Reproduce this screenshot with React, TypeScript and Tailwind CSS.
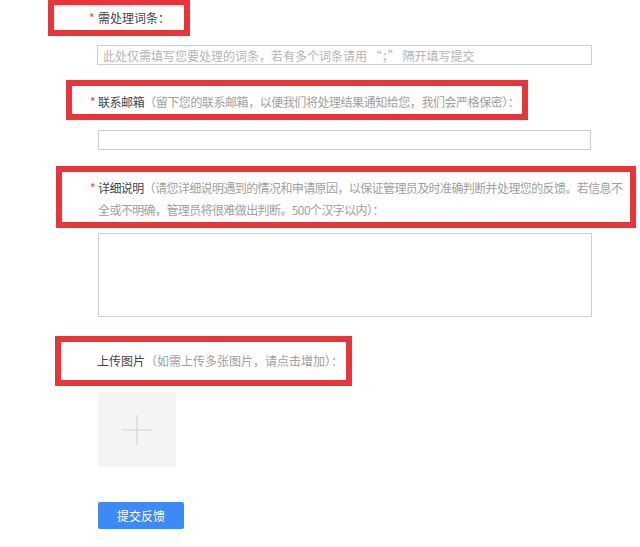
const font = { fontFamily: '"Noto Sans CJK SC", "Noto Sans", sans-serif' }

function Star() {
  return <span className="w-[8px] shrink-0 text-[#e04848] text-[12px] leading-[22px]">*</span>
}

export default function App() {
  return (
    <div className="w-[640px] h-[547px] bg-white overflow-hidden text-[12px] text-[#444]" style={font}>
      {/* 需处理词条 */}
      <div className="mt-[-1px] ml-[48px] w-[142px] h-[37px] border-[6px] border-[#e6363c] flex items-center pl-[35px] whitespace-nowrap">
        <Star />
        <span className="ml-[1px]">需处理词条：</span>
      </div>
      <input
        className="block mt-[9px] ml-[97px] w-[495px] h-[20px] border border-[#cfcfcf] px-[5px] text-[12px] placeholder:text-[#b4b4b4] outline-none"
        placeholder="此处仅需填写您要处理的词条，若有多个词条请用 “；” 隔开填写提交"
      />

      {/* 联系邮箱 */}
      <div className="mt-[15px] ml-[66px] w-[462px] h-[40px] border-[6px] border-[#e6363c] flex items-center pl-[18px] pt-[4px] whitespace-nowrap">
        <Star />
        <span className="tracking-[-0.45px]">
          联系邮箱<span className="text-[#a0a0a0]">（留下您的联系邮箱，以便我们将处理结果通知给您，我们会严格保密）：</span>
        </span>
      </div>
      <input className="block mt-[10px] ml-[98px] w-[493px] h-[20px] border border-[#cfcfcf] outline-none" />

      {/* 详细说明 */}
      <div className="mt-[16px] ml-[56px] w-[580px] h-[62px] border-[6px] border-[#e6363c] flex pl-[28px] pt-[5px]">
        <Star />
        <div className="w-[532px] shrink-0 leading-[22px] tracking-[-0.6px]">
          详细说明
          <span className="text-[#a0a0a0]">
            （请您详细说明遇到的情况和申请原因，以保证管理员及时准确判断并处理您的反馈。若信息不全或不明确，管理员将很难做出判断。500个汉字以内）：
          </span>
        </div>
      </div>
      <textarea className="block mt-[5px] ml-[98px] w-[494px] h-[84px] border border-[#cfcfcf] resize-none outline-none" />

      {/* 上传图片 */}
      <div className="mt-[19px] ml-[55px] w-[297px] h-[50px] border-[6px] border-[#e6363c] flex items-center pl-[36px] whitespace-nowrap">
        <span>
          上传图片<span className="text-[#a0a0a0]">（如需上传多张图片，请点击增加）：</span>
        </span>
      </div>
      <div className="mt-[6px] ml-[98px] w-[78px] h-[75px] bg-[#f4f4f4] flex items-center justify-center">
        <svg width="32" height="32" viewBox="0 0 32 32">
          <path d="M16 1v30M1 16h30" stroke="#cfcfcf" strokeWidth="1" />
        </svg>
      </div>

      <button className="block mt-[35px] ml-[98px] w-[86px] h-[27px] rounded-[2px] bg-[#3d8af7] text-white text-[12px]">
        提交反馈
      </button>
    </div>
  )
}
